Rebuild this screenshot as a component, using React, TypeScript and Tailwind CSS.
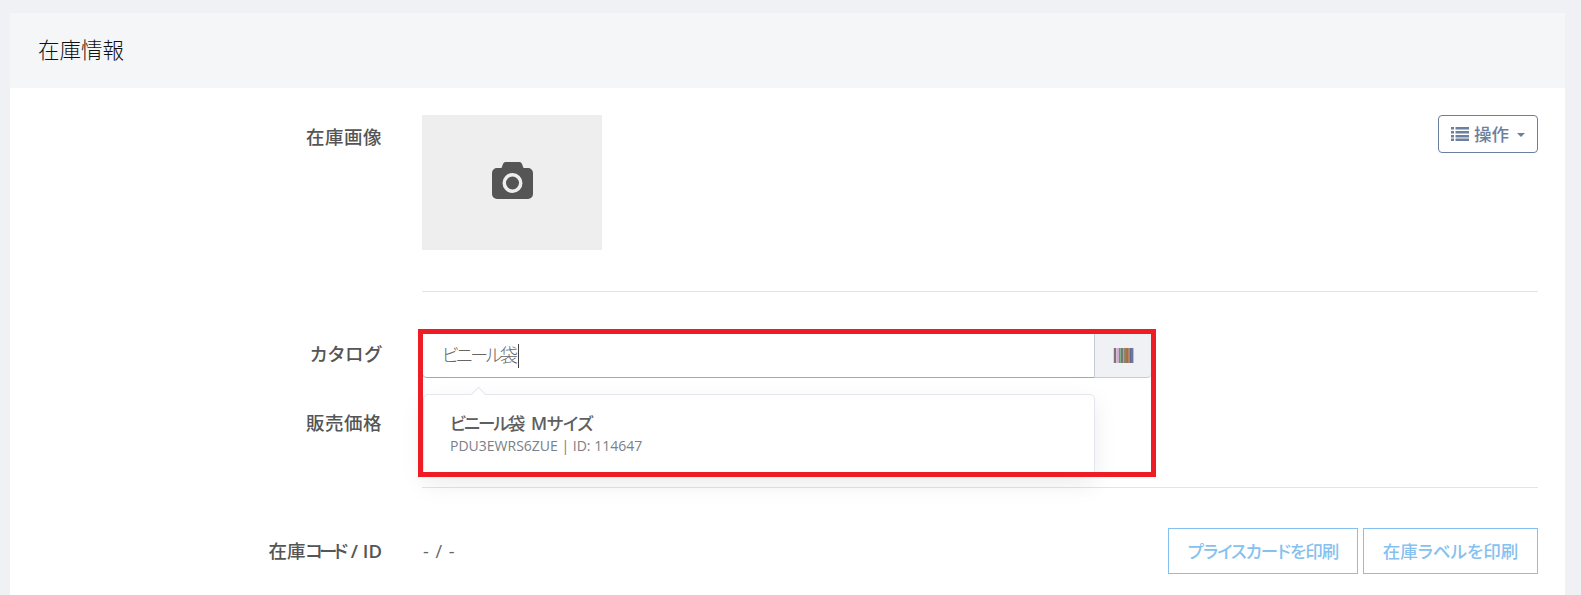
const FONT = "font-['Open_Sans','Noto_Sans_CJK_JP',sans-serif] [font-feature-settings:'palt']";
const LABEL = "w-[372px] text-right text-[18.5px] font-medium text-[#555] leading-[24px]";
const PRINT = "h-[46px] border border-[#85c1f0] text-[#85c1f0] text-[17.5px] font-medium";

function Camera() {
  return (
    <svg width="41" height="37" viewBox="0 0 41 37">
      <path
        fillRule="evenodd"
        fill="#555"
        d="M14 0h13a3 3 0 0 1 3 2l1.500 4h4.500a5 5 0 0 1 5 5v21a5 5 0 0 1-5 5H5a5 5 0 0 1-5-5V11a5 5 0 0 1 5-5h4.500l1.500-4a3 3 0 0 1 3-2zM20.500 11a10 10 0 1 0 0 20a10 10 0 0 0 0-20zM20.500 14.500a6.500 6.500 0 1 1 0 13a6.500 6.500 0 0 1 0-13z"
      />
    </svg>
  );
}

function Barcode() {
  const stripes = ["#dfe08a", "#777", "#e0b8d0", "#c8b0d0", "#6a8ab0", "#80b090", "#777", "#c8a070", "#888866", "#a07050", "#6080a0", "#c08060", "#5a6a90", "#6878a0", "#80d8e8"];
  return (
    <svg width="21" height="15" viewBox="0 0 21 15" shapeRendering="crispEdges">
      {stripes.map((c, i) => (
        <rect key={i} x={i * 1.4} y="0" width="1.4" height="15" fill={c} />
      ))}
    </svg>
  );
}

function ListIcon() {
  return (
    <svg width="18" height="14" viewBox="0 0 18 14" fill="#6b7f9e">
      <rect x="0" y="0" width="3" height="2.500" />
      <rect x="4.500" y="0" width="13.500" height="2.500" />
      <rect x="0" y="4" width="3" height="2.500" />
      <rect x="4.500" y="4" width="13.500" height="2.500" />
      <rect x="0" y="8" width="3" height="2.500" />
      <rect x="4.500" y="8" width="13.500" height="2.500" />
      <rect x="0" y="11.500" width="3" height="2.500" />
      <rect x="4.500" y="11.500" width="13.500" height="2.500" />
    </svg>
  );
}

export default function App() {
  return (
    <div className={`${FONT} h-[595px] overflow-hidden bg-[#f0f1f5] pt-[13px] pl-[10px] pr-[16px]`}>
      <div className="bg-white h-[582px]">
        <div className="h-[75px] bg-[#f5f6f8] flex items-center pl-[28px] text-[21.5px] font-light text-[#111]">在庫情報</div>
        <div className="pt-[27px] pr-[27px]">
          <div className="flex">
            <div className={`${LABEL} pt-[10px] tracking-[0.5px]`}>在庫画像</div>
            <div className="ml-[40px] flex-1 flex justify-between items-start">
              <div className="w-[180px] h-[135px] bg-[#eeeeee] flex items-center justify-center">
                <div className="mb-[4px] ml-[1px] flex">
                  <Camera />
                </div>
              </div>
              <button className="w-[100px] h-[38px] rounded-[4px] border border-[#6b7f9e] text-[#6b7f9e] text-[17.5px] font-medium flex items-center justify-center gap-[5px]">
                <ListIcon />
                <span>操作</span>
                <span className="ml-[3px] mt-[1px] w-0 h-0 border-x-[4px] border-x-transparent border-t-[4px] border-t-[#6b7f9e]" />
              </button>
            </div>
          </div>
          <div className="ml-[412px] mt-[41px] border-t border-[#e4e4e6]" />

          <div className="flex mt-[42px]">
            <div className={`${LABEL} pt-[8px] tracking-[1px]`}>カタログ</div>
            <div className="ml-[41px] relative flex">
              <div className="w-[671px] h-[44px] border-b border-[#a0a8b8] rounded-bl-[4px] pl-[19px] flex items-center text-[18px] font-light text-[#666]">
                <span className="tracking-[-2.4px]">ビニール袋</span>
                <span className="inline-block w-px h-[24px] bg-[#444] ml-[2px]" />
              </div>
              <div className="w-[57px] h-[44px] bg-[#f0f1f5] border-l border-b border-[#c8ccd8] rounded-br-[4px] flex items-center justify-center">
                <Barcode />
              </div>
              <div className="absolute left-0 top-[60px] w-[672px] h-[82px] bg-white border border-[#e4e6ef] rounded-[5px] shadow-[0_8px_24px_rgba(0,0,0,0.08)] pl-[26px] pt-[15px]">
                <div className="absolute -top-[6px] left-[49px] w-[11px] h-[11px] rotate-45 bg-white border-l border-t border-[#e4e6ef]" />
                <div className="text-[17.5px] font-medium text-[#5f5f5f] leading-[26px]">
                  <span className="tracking-[-2px]">ビニール袋</span> <span className="font-semibold ml-[3px]">M</span><span className="tracking-[-0.6px]">サイズ</span>
                </div>
                <div className="text-[14px] text-[#7a8088] leading-[20px]">PDU3EWRS6ZUE | ID: 114647</div>
              </div>
              <div className="absolute -left-[5px] -top-[5px] w-[738px] h-[148px] border-[5px] border-[#ee1c25]" />
            </div>
          </div>

          <div className="flex mt-[33px]">
            <div className={`${LABEL} tracking-[0.5px]`}>販売価格</div>
          </div>
          <div className="ml-[412px] mt-[52px] border-t border-[#e4e4e6]" />

          <div className="flex items-center mt-[40px]">
            <div className={LABEL}>
              在庫<span className="tracking-[-4px]">コード</span><span className="font-semibold ml-[2px]"> / ID</span>
            </div>
            <div className="ml-[41px] text-[18px] tracking-[1px] text-[#666] flex-1">- / -</div>
            <div className="flex gap-[5px]">
              <button className={`w-[190px] ${PRINT} tracking-[-1px]`}>プライスカードを印刷</button>
              <button className={`w-[175px] ${PRINT}`}>在庫ラベルを印刷</button>
            </div>
          </div>
        </div>
      </div>
    </div>
  );
}
